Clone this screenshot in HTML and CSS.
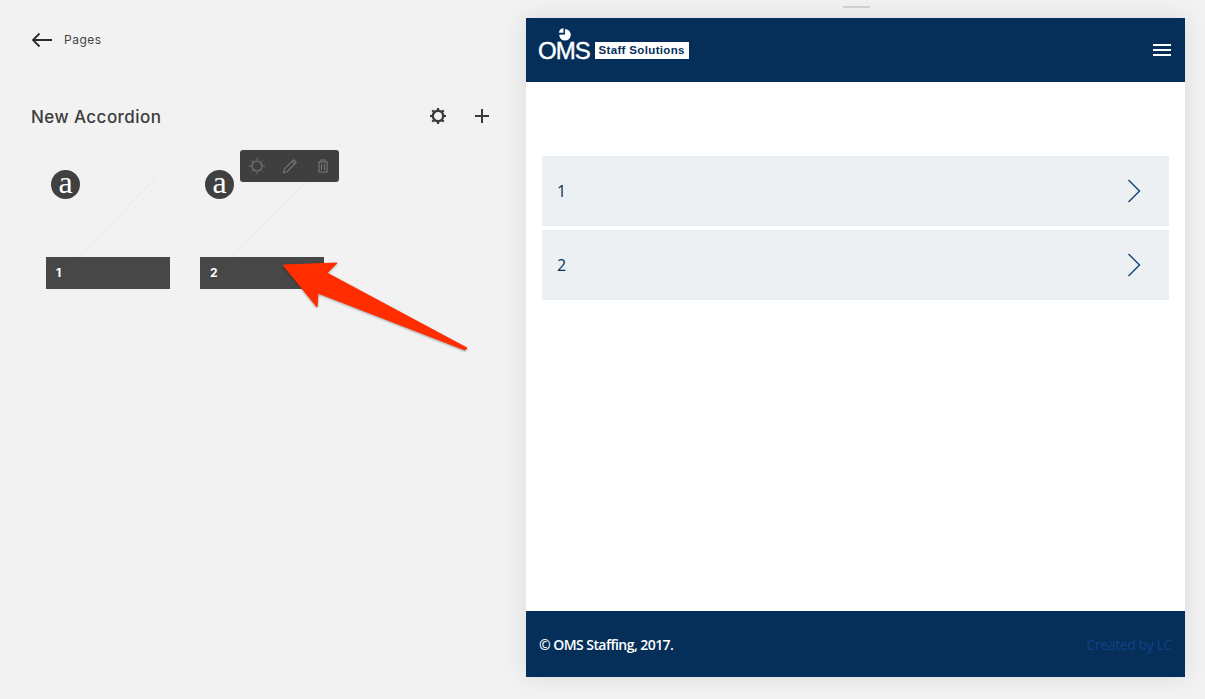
FILE: index.html
```html
<!DOCTYPE html>
<html lang="en">
<head>
  <meta charset="UTF-8">
  <meta name="viewport" content="width=device-width, initial-scale=1.0">
  <title>New Accordion</title>
  <link rel="stylesheet" href="styles.css">
</head>
<body>
  <!-- Left editing panel -->
  <div class="panel">
    <div class="back-row">
      <svg class="back-icon" width="22" height="16" viewBox="0 0 22 16"><path d="M21 8H2M8.500 1.500L2 8l6.500 6.500" fill="none" stroke="#2b2b2b" stroke-width="1.800"/></svg>
      <span>Pages</span>
    </div>

    <div class="title-row">
      <h1>New Accordion</h1>
      <div class="title-actions">
        <svg width="18" height="18" viewBox="0 0 18 18"><circle cx="9" cy="9" r="5.200" fill="none" stroke="#3a3a3a" stroke-width="2.400"/><path d="M9 1v3M9 14v3M1 9h3M14 9h3M3.300 3.300l2.100 2.100M12.600 12.600l2.100 2.100M14.700 3.300l-2.100 2.100M5.400 12.600l-2.100 2.100" stroke="#3a3a3a" stroke-width="2.200"/></svg>
        <svg width="16" height="16" viewBox="0 0 16 16"><path d="M8 1v14M1 8h14" stroke="#3a3a3a" stroke-width="2"/></svg>
      </div>
    </div>

    <div class="tiles">
      <div class="tile">
        <svg class="tile-line" width="124" height="80" viewBox="0 0 124 80"><path d="M111 0L32 80" stroke="#e6e6e6"/></svg>
        <div class="avatar">a</div>
        <div class="tile-bar">1</div>
      </div>
      <div class="tile">
        <svg class="tile-line" width="124" height="80" viewBox="0 0 124 80"><path d="M111 0L32 80" stroke="#e6e6e6"/></svg>
        <div class="avatar">a</div>
        <div class="tile-bar">2</div>
        <div class="toolbar">
          <svg width="16" height="16" viewBox="0 0 16 16"><circle cx="8" cy="8" r="5" fill="none" stroke="#777" stroke-width="1.200"/><path d="M8 0v2M8 14v2M0 8h2M14 8h2M2.300 2.300l1.300 1.300M12.400 12.400l1.300 1.300M13.700 2.300l-1.300 1.300M3.600 12.400l-1.300 1.300" stroke="#777"/></svg>
          <svg width="16" height="16" viewBox="1 0 16 16"><path d="M1.500 14.500l.8-3.500L11.500 1.800l2.700 2.700L5 13.700zM10 3.300l2.700 2.700" fill="none" stroke="#777" stroke-width="1.100"/></svg>
          <svg width="12" height="14" viewBox="0 0 12 14"><path d="M1 3h10M4 3V1h4v2M2 3v10h8V3M4.500 5v6M7.500 5v6" fill="none" stroke="#777" stroke-width="1.100"/></svg>
        </div>
      </div>
    </div>
  </div>

  <!-- Site preview -->
  <div class="preview">
    <header class="site-header">
      <div class="logo">
        <div class="logo-mark">
          <svg class="logo-pie" width="14" height="13" viewBox="0 0 14 13"><path d="M7 6.500V1a5.800 5.800 0 1 1-5.800 5.800z" fill="#fff"/><path d="M5.500 4.800H1A4.500 4.500 0 0 1 5.500.300z" fill="#fff"/></svg>
          <span class="logo-oms">OMS</span>
        </div>
        <span class="logo-tag">Staff Solutions</span>
      </div>
      <div class="burger"><span></span><span></span><span></span></div>
    </header>

    <main class="site-main">
      <div class="acc-row">
        <span>1</span>
        <svg width="14" height="24" viewBox="0 0 14 24"><path d="M1.500 1l11 11-11 11" fill="none" stroke="#1c4a7c" stroke-width="1.500"/></svg>
      </div>
      <div class="acc-row">
        <span>2</span>
        <svg width="14" height="24" viewBox="0 0 14 24"><path d="M1.500 1l11 11-11 11" fill="none" stroke="#1c4a7c" stroke-width="1.500"/></svg>
      </div>
    </main>

    <footer class="site-footer">
      <span class="copy">© OMS Staffing, 2017.</span>
      <span class="credit">Created by LC</span>
    </footer>
  </div>

  <div class="handle"></div>

  <!-- Red annotation arrow -->
  <svg class="arrow" width="1205" height="699" viewBox="0 0 1205 699"><polygon points="283,265 337,263 327,273 467,348 465,350 318,293 317,307" fill="#ff2d00" stroke="#ff2d00" stroke-linejoin="round"/></svg>
</body>
</html>
```

FILE: styles.css
```css
body {
  margin: 0;
  height: 100vh;
  overflow: hidden;
  display: flex;
  background-color: #f2f2f2;
  font-family: Inter, Arial, sans-serif;
  color: #3a3a3a;
}

.panel {
  width: 526px;
  flex-shrink: 0;
  padding: 31px 36px 0 31px;
  box-sizing: border-box;
}

.back-row {
  display: flex;
  align-items: center;
  gap: 11px;
  height: 18px;
  font-size: 12px;
  letter-spacing: 0.5px;
  color: #444;
}

.back-row span {
  padding-bottom: 2px;
}

.title-row {
  display: flex;
  align-items: center;
  justify-content: space-between;
  margin-top: 55px;
  height: 24px;
}

h1 {
  margin: 0;
  padding-top: 2px;
  font-size: 17px;
  font-weight: 500;
  letter-spacing: 0.45px;
  color: #3c3c3c;
}

.title-actions {
  display: flex;
  align-items: center;
  gap: 27px;
}

.tiles {
  display: flex;
  gap: 30px;
  margin: 42px 0 0 15px;
}

.tile {
  position: relative;
  width: 124px;
  height: 119px;
  display: flex;
  flex-direction: column;
  justify-content: space-between;
}

.tile-line {
  position: absolute;
  left: 0;
  top: 7px;
}

.avatar {
  position: relative;
  width: 29px;
  height: 29px;
  margin-left: 5px;
  border-radius: 50%;
  background-color: #404040;
  color: #fff;
  font-family: "Liberation Serif", "DejaVu Serif", serif;
  font-size: 32px;
  line-height: 25px;
  text-align: center;
}

.tile-bar {
  position: relative;
  height: 32px;
  padding-left: 10px;
  background-color: #474747;
  color: #fff;
  font-size: 12px;
  font-weight: 700;
  line-height: 31px;
}

.toolbar {
  position: absolute;
  left: 40px;
  top: -20px;
  width: 99px;
  height: 32px;
  padding: 0 10px 0 9px;
  box-sizing: border-box;
  display: flex;
  align-items: center;
  justify-content: space-between;
  background-color: #3f3f3f;
  border-radius: 3px;
}

.preview {
  width: 659px;
  height: 659px;
  margin-top: 18px;
  flex-shrink: 0;
  display: flex;
  flex-direction: column;
  background-color: white;
  box-shadow: 0 0 22px rgba(0, 0, 0, 0.1);
  font-family: "Open Sans", Arial, sans-serif;
}

.site-header {
  height: 64px;
  flex-shrink: 0;
  display: flex;
  align-items: center;
  justify-content: space-between;
  padding: 0 14px 0 12px;
  background-color: #052f59;
}

.logo {
  display: flex;
  align-items: flex-end;
  gap: 5px;
}

.logo-mark {
  position: relative;
  height: 17px;
}

.logo-oms {
  display: block;
  font-family: "Liberation Sans", Arial, sans-serif;
  font-size: 24px;
  line-height: 17px;
  letter-spacing: -1px;
  color: white;
  -webkit-text-stroke: 0.4px white;
}

.logo-pie {
  position: absolute;
  left: 20px;
  top: -14px;
}

.logo-tag {
  height: 17px;
  width: 94px;
  text-align: center;
  background-color: white;
  color: #052f59;
  font-family: "Liberation Sans", Arial, sans-serif;
  font-size: 11.5px;
  font-weight: 700;
  line-height: 17px;
  letter-spacing: 0.35px;
}

.burger {
  display: flex;
  flex-direction: column;
  gap: 3px;
  width: 18px;
}

.burger span {
  height: 2px;
  background-color: white;
}

.site-main {
  flex: 1;
  padding: 74px 16px 0;
  display: flex;
  flex-direction: column;
  gap: 4px;
}

.acc-row {
  height: 70px;
  display: flex;
  align-items: center;
  justify-content: space-between;
  padding: 0 28px 0 15px;
  background-color: #ecf0f3;
  color: #052f59;
  font-size: 16px;
  line-height: 20px;
}

.site-footer {
  height: 66px;
  flex-shrink: 0;
  display: flex;
  align-items: center;
  justify-content: space-between;
  padding: 0 13px;
  background-color: #052f59;
  font-size: 14px;
}

.copy {
  color: white;
  font-weight: 600;
  letter-spacing: -0.55px;
}

.credit {
  color: #0f4287;
  letter-spacing: -0.4px;
}

.handle {
  position: absolute;
  left: 843px;
  top: 6px;
  width: 27px;
  height: 2px;
  background-color: #cfcfcf;
}

.arrow {
  position: absolute;
  left: 0;
  top: 0;
  filter: drop-shadow(0 1px 1px rgba(0, 0, 0, 0.35));
  pointer-events: none;
}
```
